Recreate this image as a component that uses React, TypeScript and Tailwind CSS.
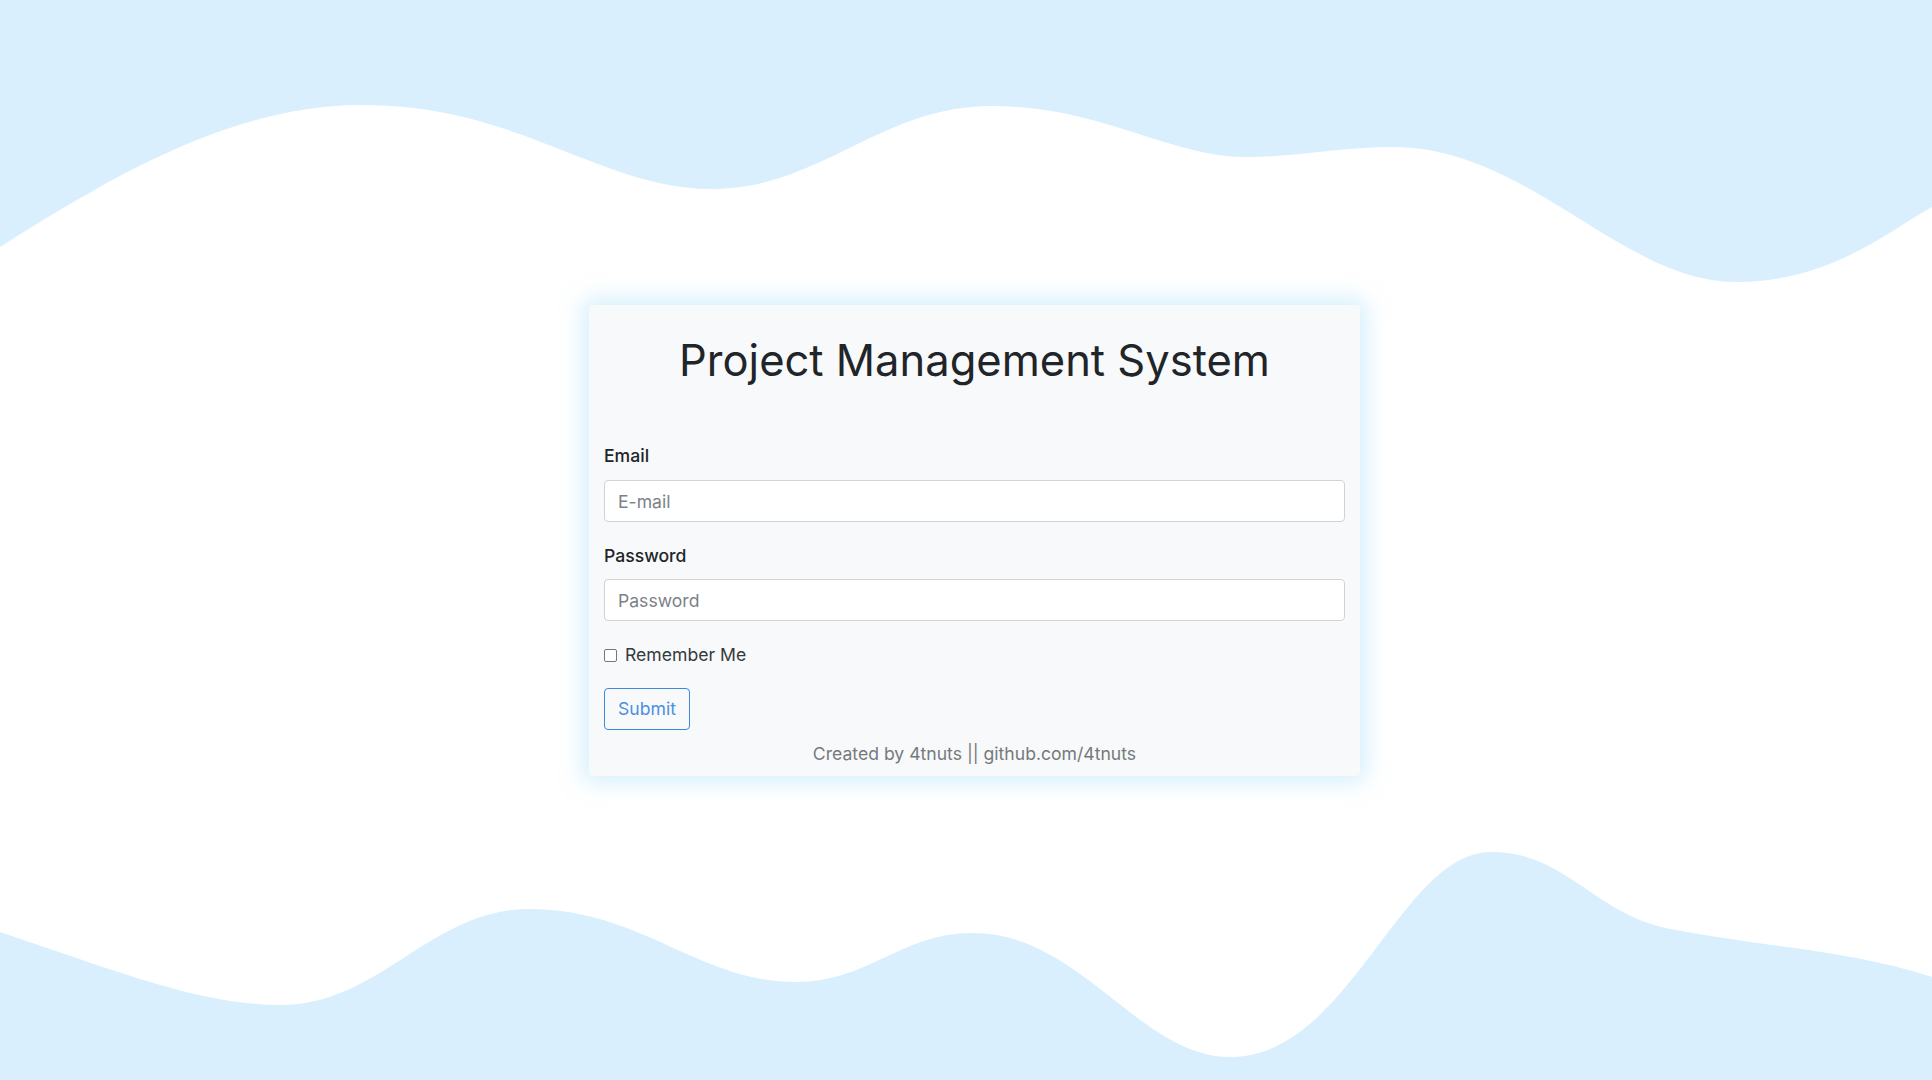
import React from "react";

export default function App() {
  const font = { fontFamily: "Inter, 'Noto Sans', sans-serif" };
  return (
    <div
      className="relative w-full h-[1080px] bg-white overflow-hidden"
      style={font}
    >
      <svg
        className="absolute left-0 top-0 w-[1932px] h-[300px]"
        viewBox="0 0 1932 300"
        preserveAspectRatio="none"
      >
        <path
          fill="#d9effd"
          d="M0,247 C110,178 230,105 363,105 C520,105 600,189 712,189 C820,189 880,106 992,106 C1100,106 1170,157 1244,157 C1300,157 1340,147 1392,147 C1530,147 1620,282 1737,282 C1830,282 1890,230 1932,207 L1932,0 L0,0 Z"
        />
      </svg>
      <svg
        className="absolute left-0 top-[830px] w-[1932px] h-[250px]"
        viewBox="0 830 1932 250"
        preserveAspectRatio="none"
      >
        <path
          fill="#d9effd"
          d="M0,932 C120,972 200,1005 281,1005 C380,1005 430,909 530,909 C640,909 700,982 795,982 C870,982 900,933 973,933 C1080,933 1140,1057 1230,1057 C1350,1057 1400,852 1491,852 C1565,852 1590,910 1665,928 C1770,948 1850,950 1932,977 L1932,1080 L0,1080 Z"
        />
      </svg>

      <div className="relative flex justify-center pt-[305px] pl-[17px]">
        <div className="w-[771px] h-[471px] bg-[#f8f9fa] rounded-[4px] shadow-[0_0_22px_6px_rgba(175,225,250,0.55)] px-[15px] pt-[29px] flex flex-col">
          <h1 className="text-[43.5px] leading-[53px] text-[#212529] font-normal text-center">
            Project Management System
          </h1>
          <label className="mt-[56px] text-[17.6px] leading-[26px] font-medium text-[#212529]">
            Email
          </label>
          <input
            type="email"
            placeholder="E-mail"
            className="mt-[11px] h-[42px] w-full bg-white border border-[#ced4da] rounded-[4px] px-[13px] text-[17.6px] text-[#495057] placeholder:text-[#7b8288] outline-none"
          />
          <label className="mt-[21px] text-[17.6px] leading-[26px] font-medium text-[#212529]">
            Password
          </label>
          <input
            type="password"
            placeholder="Password"
            className="mt-[10px] h-[42px] w-full bg-white border border-[#ced4da] rounded-[4px] px-[13px] text-[17.6px] text-[#495057] placeholder:text-[#7b8288] outline-none"
          />
          <div className="mt-[21px] flex items-center gap-[8px] h-[26px]">
            <span className="w-[13px] h-[13px] border border-[#767676] rounded-[2px] bg-white" />
            <span className="text-[17.6px] leading-[26px] text-[#343a40]">
              Remember Me
            </span>
          </div>
          <div className="mt-[20px]">
            <button className="h-[42px] w-[86px] border border-[#3f88e0] rounded-[4px] text-[17.6px] text-[#4a90e2] bg-transparent">
              Submit
            </button>
          </div>
          <div className="mt-[11px] text-center text-[17.6px] leading-[26px] text-[#74797e]">
            Created by 4tnuts || github.com/4tnuts
          </div>
        </div>
      </div>
    </div>
  );
}
